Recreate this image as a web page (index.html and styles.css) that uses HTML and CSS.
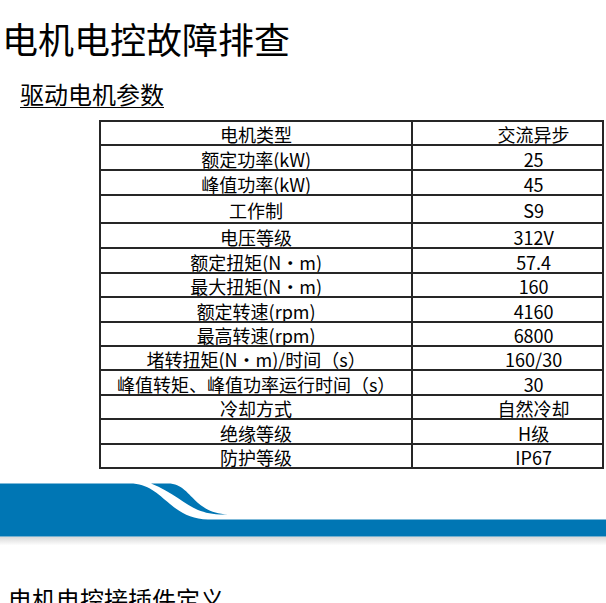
FILE: index.html
```html
<!DOCTYPE html>
<html lang="zh-CN">
<head>
<meta charset="utf-8">
<title>电机电控故障排查</title>
<link rel="stylesheet" href="styles.css">
</head>
<body>
<h1 class="title">电机电控故障排查</h1>
<h2 class="subtitle">驱动电机参数</h2>
<table class="params">
  <tbody>
    <tr><td class="k">电机类型</td><td class="v">交流异步</td></tr>
    <tr class="r25"><td class="k">额定功率(kW)</td><td class="v">25</td></tr>
    <tr class="r25"><td class="k">峰值功率(kW)</td><td class="v">45</td></tr>
    <tr class="tall"><td class="k">工作制</td><td class="v">S9</td></tr>
    <tr class="r25"><td class="k">电压等级</td><td class="v">312V</td></tr>
    <tr class="r25"><td class="k">额定扭矩(N·m)</td><td class="v">57.4</td></tr>
    <tr><td class="k">最大扭矩(N·m)</td><td class="v">160</td></tr>
    <tr class="r25"><td class="k">额定转速(rpm)</td><td class="v">4160</td></tr>
    <tr><td class="k">最高转速(rpm)</td><td class="v">6800</td></tr>
    <tr><td class="k">堵转扭矩(N·m)/时间（s）</td><td class="v">160/30</td></tr>
    <tr class="r25"><td class="k">峰值转矩、峰值功率运行时间（s）</td><td class="v">30</td></tr>
    <tr><td class="k">冷却方式</td><td class="v">自然冷却</td></tr>
    <tr class="r25"><td class="k">绝缘等级</td><td class="v">H级</td></tr>
    <tr><td class="k">防护等级</td><td class="v">IP67</td></tr>
  </tbody>
</table>
<svg class="banner" width="606" height="66" viewBox="0 0 606 66" aria-hidden="true">
  <defs>
    <linearGradient id="shade" x1="0" y1="0" x2="0" y2="1">
      <stop offset="0" stop-color="#d6d6d6"/>
      <stop offset="1" stop-color="#ffffff"/>
    </linearGradient>
  </defs>
  <rect x="0" y="56.5" width="606" height="9" fill="url(#shade)"/>
  <path d="M0 3.5 H130 C148 3.5 158 14 170 24 C182 34 192 39 208 39.5 H606 V56.5 H0 Z" fill="#0076b4"/>
  <path d="M151 3.5 H168 C182 3.5 188 14 198 23 C208 31 215 33.5 228 34.5 C214 35 206 33 198 30 C186 25 172 12 151 3.5 Z" fill="#0076b4"/>
</svg>
<h2 class="section">电机电控接插件定义</h2>
</body>
</html>
```

FILE: styles.css
```css
html, body {
  margin: 0;
  padding: 0;
  overflow: hidden;
  background: #ffffff;
}

body {
  width: 606px;
  height: 603px;
  font-family: "Noto Sans CJK SC", "Noto Sans", sans-serif;
  color: #000;
}

.title {
  margin: 20px 0 0 2px;
  font-size: 36px;
  line-height: 36px;
  font-weight: normal;
}

.subtitle {
  margin: 26px 0 0 20px;
  font-size: 24px;
  line-height: 24px;
  font-weight: normal;
  text-decoration: underline;
  text-decoration-thickness: 1px;
  text-underline-offset: 3px;
}

.params {
  margin: 14px 0 0 99px;
  border-collapse: separate;
  border-spacing: 0;
  border-top: 2px solid #262626;
  border-left: 2px solid #262626;
  width: 505px;
  table-layout: fixed;
  font-size: 18px;
}

.params tr {
  height: 24px;
}

.params tr.r25 {
  height: 25px;
}

.params tr.tall {
  height: 28px;
}

.params td {
  border-right: 2px solid #262626;
  border-bottom: 2px solid #262626;
  text-align: center;
  vertical-align: middle;
  padding: 2px 0 0 0;
  line-height: 18px;
  white-space: nowrap;
  overflow: hidden;
}

.params td.k {
  width: 309px;
}

.params td.v {
  width: 190px;
  padding-left: 52px;
  box-sizing: border-box;
}

.banner {
  display: block;
  margin-top: 11px;
}

.section {
  margin: 41px 0 0 8px;
  font-size: 24px;
  line-height: 24px;
  font-weight: normal;
}
```
